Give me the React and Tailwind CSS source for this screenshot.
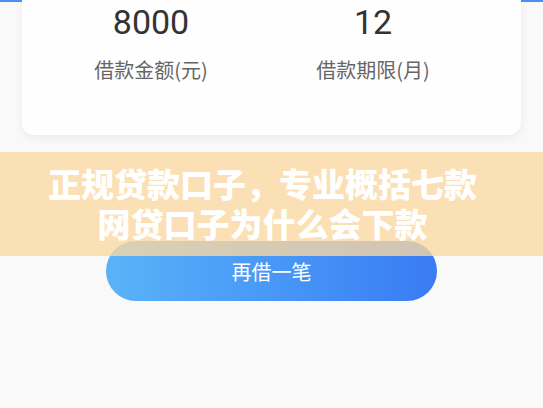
import React from "react";

const cjk = { fontFamily: '"Noto Sans CJK SC", "Noto Sans", sans-serif' };
const num = { fontFamily: 'Roboto, "Noto Sans", sans-serif' };

function Stat({ value, label }) {
  return (
    <div className="flex flex-col items-center">
      <div className="text-[34px] leading-[42px] text-[#333333] pt-[1px]" style={num}>
        {value}
      </div>
      <div className="mt-[13px] text-[20px] leading-[28px] text-[#666666]" style={cjk}>
        {label}
      </div>
    </div>
  );
}

export default function App() {
  return (
    <div className="relative w-[543px] h-[408px] overflow-hidden bg-[#f9f9f9]" style={cjk}>
      {/* 顶部蓝色背景的尾部 */}
      <div className="h-[2px] bg-[#4a90f0]" />

      {/* 借款信息卡片 */}
      <div className="mx-[22px] -mt-[2px] h-[135px] rounded-b-[12px] bg-[#fefefe] shadow-[0_3px_10px_rgba(0,0,0,0.06)]">
        <div className="grid grid-cols-2 pl-[18px] pr-[37px]">
          <Stat value="8000" label="借款金额(元)" />
          <Stat value="12" label="借款期限(月)" />
        </div>
      </div>

      {/* 再借一笔 */}
      <div className="flex justify-center mt-[106px]">
        <button className="w-[331px] h-[60px] rounded-full bg-gradient-to-r from-[#5ab3f8] to-[#3a7bf4] text-white text-[20px] pt-[2px]">
          再借一笔
        </button>
      </div>

      {/* 标题横幅 */}
      <div className="absolute left-0 right-0 top-[152px] h-[104px] bg-[rgba(253,216,162,0.78)] flex flex-col items-center justify-center pr-[18px]">
        <div className="text-white font-black text-[33px] leading-[40px] text-center -mt-[2px]">
          <div>正规贷款口子，专业概括七款</div>
          <div>网贷口子为什么会下款</div>
        </div>
      </div>
    </div>
  );
}
